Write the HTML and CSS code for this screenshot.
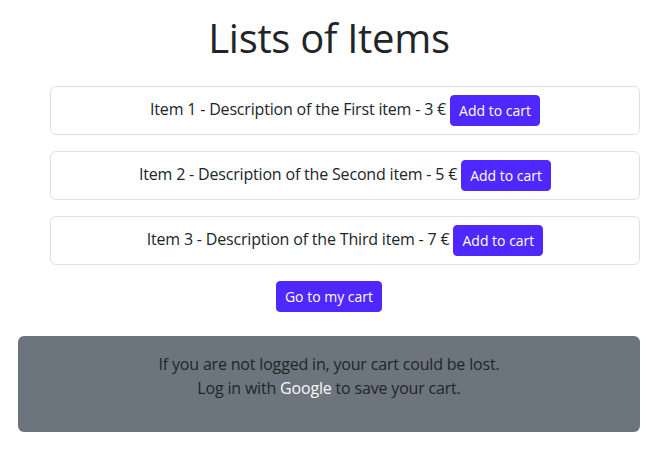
FILE: index.html
```html
<!DOCTYPE html>
<html lang="en">
<head>
<meta charset="utf-8">
<title>Lists of Items</title>
<link rel="stylesheet" href="styles.css">
</head>
<body>
<div class="page">
  <h1 class="title">Lists of Items</h1>
  <ul class="items">
    <li class="item">Item 1 - Description of the First item - 3 € <button class="btn btn-sm">Add to cart</button></li>
    <li class="item">Item 2 - Description of the Second item - 5 € <button class="btn btn-sm">Add to cart</button></li>
    <li class="item">Item 3 - Description of the Third item - 7 € <button class="btn btn-sm">Add to cart</button></li>
  </ul>
  <div class="cart-link"><button class="btn btn-sm">Go to my cart</button></div>
  <div class="notice">
    <p>If you are not logged in, your cart could be lost.<br>Log in with <a href="#" class="google">Google</a> to save your cart.</p>
  </div>
</div>
</body>
</html>
```
FILE: styles.css
```css
* { box-sizing: border-box; }
html, body { margin: 0; padding: 0; background: #fff; }
body {
  font-family: "Open Sans", "Noto Sans", sans-serif;
  font-size: 16px;
  line-height: 1.5;
  color: #212529;
  letter-spacing: -0.18px;
}
.page {
  padding: 14px 19px 0 18px;
}
.title {
  margin: 0 0 8px;
  font-size: 40px;
  font-weight: 500;
  line-height: 1.2;
  text-align: center;
  letter-spacing: -0.3px;
}
.items {
  list-style: none;
  margin: 24px 0 16px;
  padding: 0 0 0 32px;
}
.item {
  border: 1px solid #dee2e6;
  border-radius: 6px;
  padding: 8px;
  margin-bottom: 16px;
  text-align: center;
}
.item:last-child { margin-bottom: 0; }
.btn {
  display: inline-block;
  font-family: inherit;
  border: 1px solid #4f28ff;
  background: #4f28ff;
  color: #fff;
  border-radius: 4px;
  cursor: pointer;
  vertical-align: middle;
  letter-spacing: 0;
}
.btn-sm {
  font-size: 14px;
  line-height: 1.5;
  padding: 4px 8px;
}
.cart-link {
  text-align: center;
  margin-bottom: 24px;
}
.notice {
  background: #6c757d;
  border-radius: 6px;
  padding: 16px;
  text-align: center;
}
.notice p { margin: 0 0 16px; }
.google {
  color: #f8f9fa;
  text-decoration: none;
}
```
